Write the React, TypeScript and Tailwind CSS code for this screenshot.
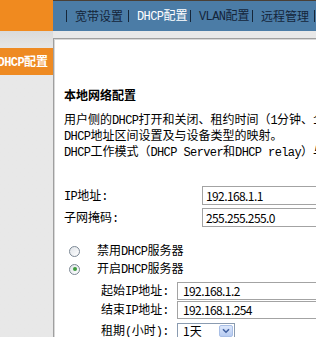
import React from "react";

const navItems = ["宽带设置", "DHCP配置", "VLAN配置", "远程管理"];

function T({ s }: { s: string }) {
  const parts = s.split(/([\x21-\x7e](?:[\x20-\x7e]*[\x21-\x7e])?)/);
  return (
    <>
      {parts.map((p, i) =>
        i % 2 === 1 ? (
          <span key={i} className="font-['Liberation_Mono',monospace] tracking-[-0.6px]">
            {p}
          </span>
        ) : (
          <React.Fragment key={i}>{p}</React.Fragment>
        )
      )}
    </>
  );
}

function Radio({ checked }: { checked?: boolean }) {
  return (
    <span className="flex h-[11px] w-[11px] items-center justify-center rounded-full border border-[#7b8794] bg-gradient-to-br from-[#dfe3e8] to-white">
      {checked ? <span className="h-[4px] w-[4px] rounded-full bg-[#3d9b3d]" /> : null}
    </span>
  );
}

export default function App() {
  return (
    <div className="flex h-[337px] w-[316px] flex-col overflow-hidden bg-[#e8e8e8] font-['Noto_Sans_CJK_SC',sans-serif] text-[12px] text-black">
      {/* header */}
      <div className="flex h-[31px] shrink-0">
        <div className="w-[53px] bg-[#f08a1f]" />
        <div className="flex flex-1 items-center border-t border-[#4a4036] bg-[#4b7ca6] pl-[13px] leading-none">
          {navItems.map((it) => (
            <div key={it} className="flex w-[62px] shrink-0 items-center">
              <span className="h-[12px] w-[1px] bg-[#16273a]" />
              <span
                className={
                  "ml-[8px] whitespace-nowrap " +
                  (it === "DHCP配置" ? "text-white" : "text-[#14253a]")
                }
              >
                <T s={it} />
              </span>
            </div>
          ))}
          <span className="h-[12px] w-[1px] shrink-0 bg-[#16273a]" />
        </div>
      </div>

      {/* body */}
      <div className="flex flex-1">
        <div className="w-[53px] shrink-0 bg-gradient-to-b from-[#dadada] to-[#e8e8e8] to-[20px] pt-[17px]">
          <div className="flex h-[27px] items-center justify-end overflow-hidden bg-[#ee8a22] pr-[5px]">
            <span className="whitespace-nowrap text-[12px] font-bold text-white">
              <span className="font-['Liberation_Mono',monospace] tracking-[-0.6px]">DHCP</span>配置
            </span>
          </div>
        </div>
        <div className="flex min-w-0 flex-1 flex-col pt-[7px]">
          <div className="flex-1 overflow-hidden border-l border-t border-[#9f9f9f] bg-white pl-[10px] pt-[49px] shadow-[inset_1px_1px_0_#d8d8d8]">
            <div className="font-bold leading-[14px]">本地网络配置</div>
            <div className="mt-[10px] whitespace-nowrap leading-[14px]">
              <div><T s="用户侧的DHCP打开和关闭、租约时间（1分钟、1小时、1天）、" /></div>
              <div><T s="DHCP地址区间设置及与设备类型的映射。" /></div>
              <div><T s="DHCP工作模式（DHCP Server和DHCP relay）与设备类型的映射。" /></div>
            </div>

            <div className="mt-[26px] flex h-[19px] items-center">
              <span className="w-[138px] shrink-0"><T s="IP地址:" /></span>
              <div className="flex h-[19px] w-[140px] shrink-0 items-center border border-[#a3a3a3] pl-[3px] tracking-[-0.6px]">192.168.1.1</div>
            </div>
            <div className="mt-[3px] flex h-[19px] items-center">
              <span className="w-[138px] shrink-0"><T s="子网掩码:" /></span>
              <div className="flex h-[19px] w-[140px] shrink-0 items-center border border-[#a3a3a3] pl-[3px] tracking-[-0.6px]">255.255.255.0</div>
            </div>

            <div className="mt-[17px] flex h-[14px] items-center pl-[5px]">
              <Radio />
              <span className="ml-[17px] whitespace-nowrap"><T s="禁用DHCP服务器" /></span>
            </div>
            <div className="mt-[4px] flex h-[14px] items-center pl-[5px]">
              <Radio checked />
              <span className="ml-[17px] whitespace-nowrap"><T s="开启DHCP服务器" /></span>
            </div>

            <div className="mt-[6px] flex h-[18px] items-center pl-[37px]">
              <span className="w-[76px] shrink-0 whitespace-nowrap"><T s="起始IP地址:" /></span>
              <div className="flex h-[18px] w-[160px] shrink-0 items-center border border-[#a3a3a3] pl-[5px] tracking-[-0.6px]">192.168.1.2</div>
            </div>
            <div className="mt-[1px] flex h-[18px] items-center pl-[37px]">
              <span className="w-[76px] shrink-0 whitespace-nowrap"><T s="结束IP地址:" /></span>
              <div className="flex h-[18px] w-[160px] shrink-0 items-center border border-[#a3a3a3] pl-[5px] tracking-[-0.6px]">192.168.1.254</div>
            </div>
            <div className="mt-[4px] flex h-[16px] items-center pl-[37px]">
              <span className="w-[76px] shrink-0 whitespace-nowrap"><T s="租期(小时):" /></span>
              <div className="flex h-[16px] w-[58px] shrink-0 items-center justify-between border border-[#8a9bb0] pl-[5px] pr-[1px]">
                <span>1天</span>
                <span className="flex h-[12px] w-[14px] items-center justify-center rounded-[2px] border border-[#a9bfe6] bg-gradient-to-b from-[#dce7fb] to-[#b7cbf1]">
                  <svg width="8" height="6" viewBox="0 0 8 6">
                    <path d="M1 1.2 L4 4.2 L7 1.2" fill="none" stroke="#3f5f9f" strokeWidth="1.6" />
                  </svg>
                </span>
              </div>
            </div>
          </div>
        </div>
      </div>
    </div>
  );
}
